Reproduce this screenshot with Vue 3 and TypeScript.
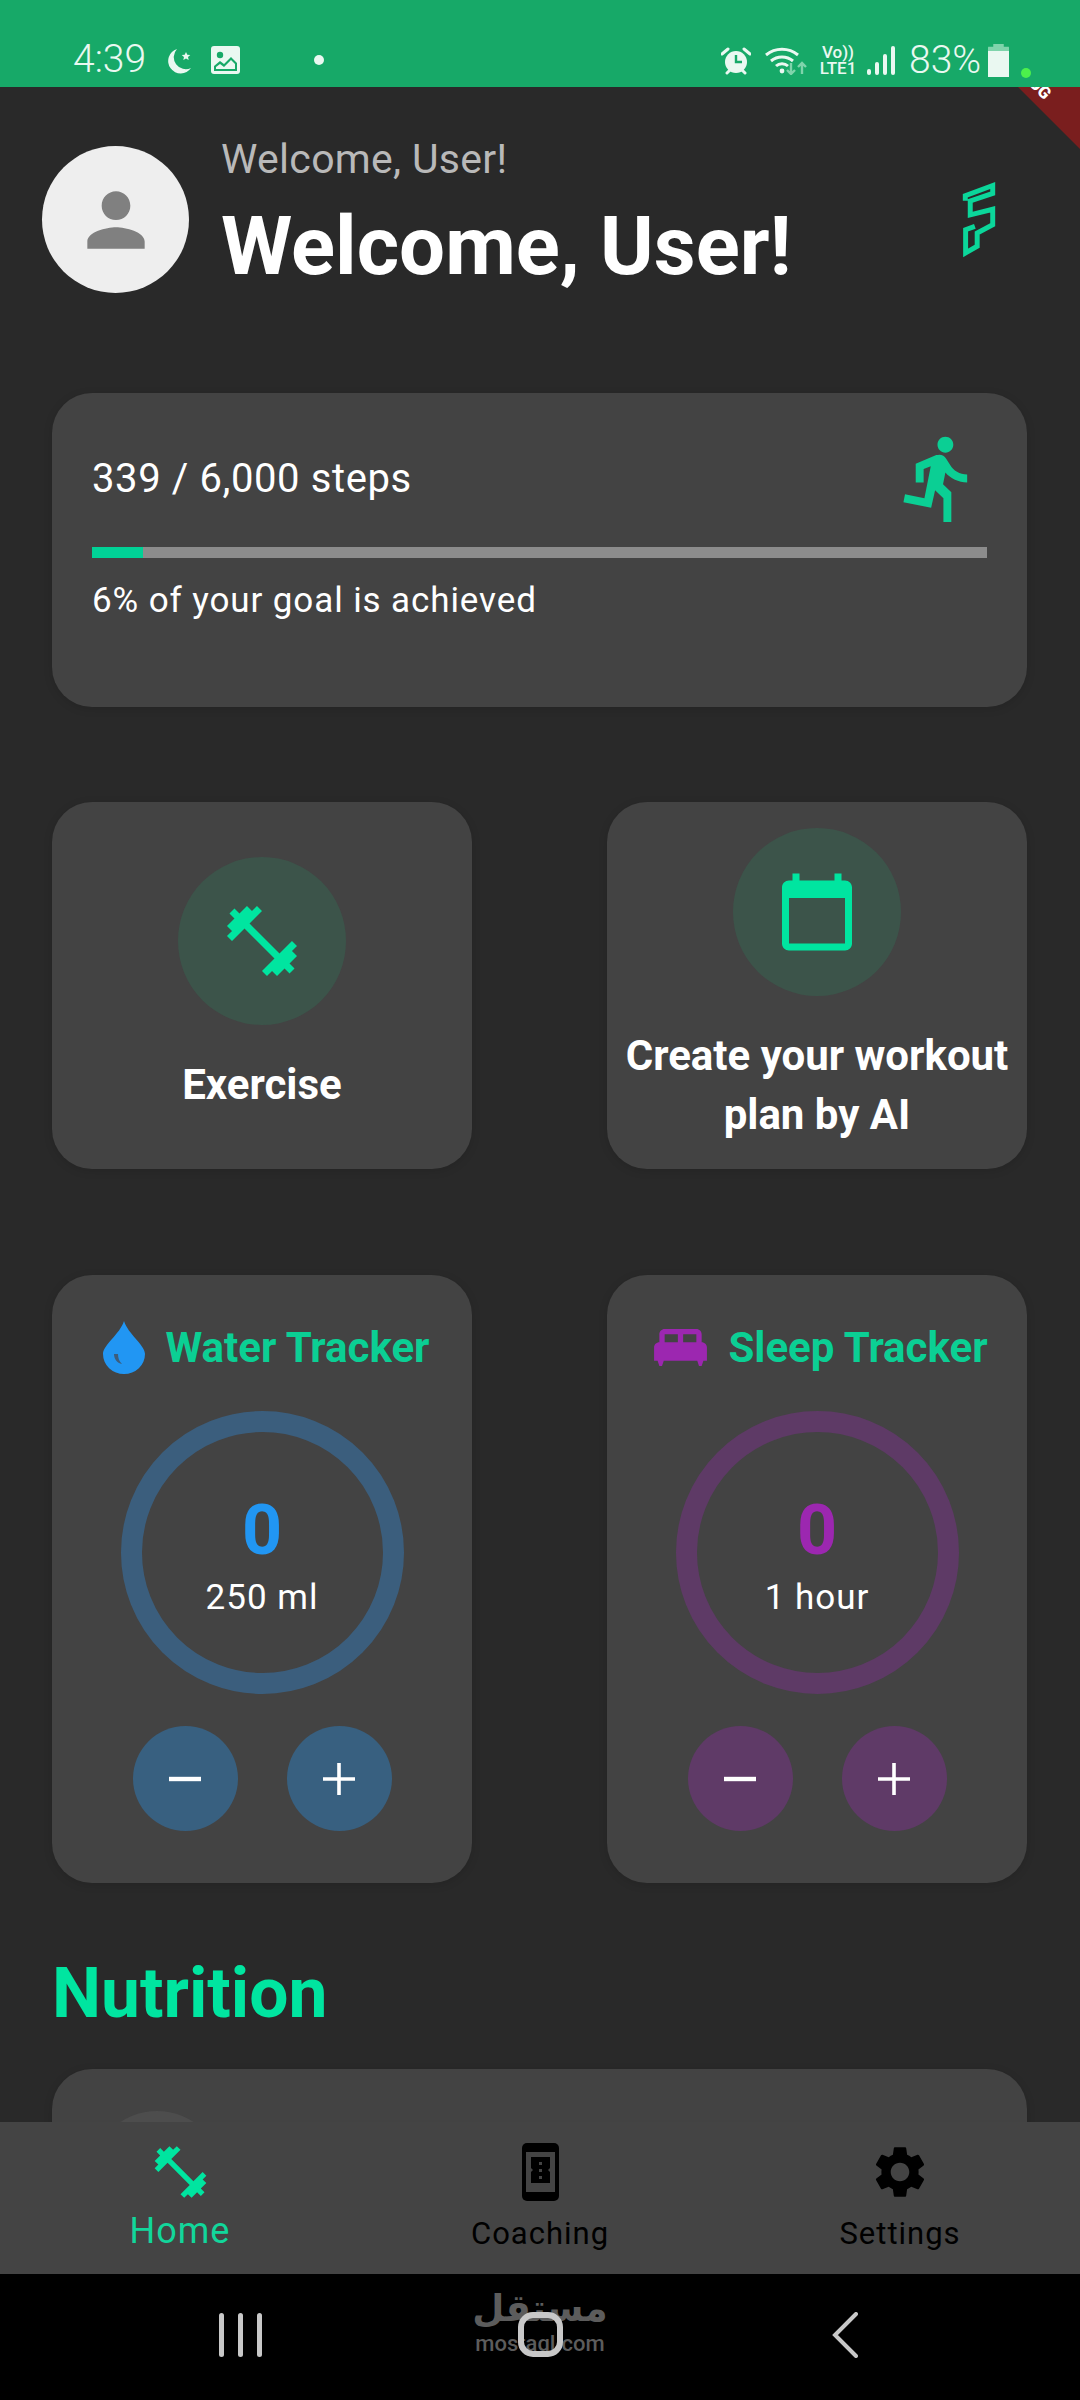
<script setup lang="ts">
import { ref } from 'vue'

// Dashboard state
const steps = ref(339)
const stepGoal = 6000
const goalRatio = (steps.value / stepGoal) * 100
const goalPercent = Math.round(goalRatio)

interface Tracker {
  id: string
  title: string
  count: number
  unit: string
  theme: string
}

const trackers: Tracker[] = [
  { id: 'water', title: 'Water Tracker', count: 0, unit: '250 ml', theme: 'blue' },
  { id: 'sleep', title: 'Sleep Tracker', count: 0, unit: '1 hour', theme: 'purple' }
]

const dumbbell =
  'M20.57 14.86L22 13.43 20.57 12 17 15.57 8.43 7 12 3.43 10.57 2 9.14 3.43 7.71 2 5.57 4.14 4.14 2.71 2.71 4.14l1.43 1.43L2 7.71l1.43 1.43L2 10.57 3.43 12 7 8.43 15.57 17 12 20.57 13.43 22l1.43-1.43L16.29 22l2.14-2.14 1.43 1.43 1.43-1.43-1.43-1.43L22 16.29z'
</script>

<template>
  <div class="phone">
    <!-- Status bar -->
    <div class="status-bar">
      <span class="clock">4:39</span>
      <svg class="st-moon" viewBox="0 0 26 26">
        <path d="M11 1A12.500 12.500 0 1 0 25 20A12 12 0 0 1 11 1Z" fill="#eaf8f1" />
        <path d="M20 4l1.300 2.800 3 .3-2.300 2 .7 3-2.700-1.500-2.700 1.500.7-3-2.300-2 3-.3z" fill="#eaf8f1" />
      </svg>
      <svg class="st-image" viewBox="0 0 29 28">
        <rect width="29" height="28" rx="3" fill="#eaf8f1" />
        <circle cx="9" cy="9" r="3.200" fill="#17a968" />
        <path d="M3 25v-5l6-5 4 3 7-7 6 6v8zM5 23h19v-5l-4-4-7 7-4-3-4 3z" fill="#17a968" />
      </svg>
      <span class="st-dot"></span>

      <svg class="st-alarm" viewBox="0 0 30 28">
        <circle cx="15" cy="15" r="11" fill="#eaf8f1" />
        <path d="M15 8v7h6" fill="none" stroke="#17a968" stroke-width="2.400" />
        <path d="M1 7l6-5M29 7l-6-5M6 26l3-3M24 26l-3-3" stroke="#eaf8f1" stroke-width="3" stroke-linecap="round" />
      </svg>
      <svg class="st-wifi" viewBox="0 0 42 30">
        <path d="M1 10a25 25 0 0 1 32 0M6 16a17 17 0 0 1 22 0M11 21a9 9 0 0 1 12 0" fill="none" stroke="#eaf8f1" stroke-width="3" />
        <circle cx="17" cy="26" r="2.400" fill="#eaf8f1" />
        <path d="M26 18v11M22 25l4 4 4-4M37 29V18M33 22l4-4 4 4" fill="none" stroke="#7fd4ab" stroke-width="2.400" />
      </svg>
      <div class="st-volte">
        <span>Vo))</span>
        <span>LTE1</span>
      </div>
      <div class="st-signal">
        <i style="height: 6px"></i>
        <i style="height: 13px"></i>
        <i style="height: 21px"></i>
        <i style="height: 29px"></i>
      </div>
      <span class="st-battery-text">83%</span>
      <div class="st-battery"><div class="st-battery-fill"></div></div>
      <span class="st-cam"></span>
    </div>

    <!-- Scrolling page -->
    <div class="content">
      <div class="debug-ribbon"><span>DEBUG</span></div>

      <header class="header">
        <div class="avatar">
          <svg viewBox="0 0 24 24" width="86" height="86">
            <path
              d="M12 12c2.210 0 4-1.790 4-4s-1.790-4-4-4-4 1.790-4 4 1.790 4 4 4zm0 2c-2.670 0-8 1.340-8 4v2h16v-2c0-2.660-5.330-4-8-4z"
              fill="#808080"
            />
          </svg>
        </div>
        <div class="greeting">
          <div class="greeting-small">Welcome, User!</div>
          <div class="greeting-big">Welcome, User!</div>
        </div>
        <svg class="logo" viewBox="180 90 115 235">
          <path
            d="M196 152V137L279 106V130L211 153V195L279 178V225L232 250V290L197 310V240L225 230"
            fill="none"
            stroke="#0bd69a"
            stroke-width="15"
          />
        </svg>
      </header>

      <section class="card steps-card">
        <div class="steps-row">
          <span class="steps-text">{{ steps }} / {{ stepGoal.toLocaleString('en-US') }} steps</span>
          <svg class="run-icon" viewBox="0 0 24 24">
            <path
              d="M13.490 5.480c1.100 0 2-.9 2-2s-.9-2-2-2-2 .9-2 2 .9 2 2 2zm-3.600 13.900l1-4.400 2.100 2v6h2v-7.500l-2.100-2 .6-3c1.300 1.500 3.300 2.500 5.500 2.500v-2c-1.900 0-3.500-1-4.300-2.400l-1-1.600c-.4-.6-1-1-1.700-1-.3 0-.5.1-.8.1l-5.200 2.200v4.700h2v-3.400l1.800-.7-1.600 8.100-4.900-1-.4 2 7 1.400z"
              fill="#0bcf94"
            />
          </svg>
        </div>
        <div class="progress"><div class="progress-fill" :style="{ width: `${goalRatio}%` }"></div></div>
        <div class="steps-note">{{ goalPercent }}% of your goal is achieved</div>
      </section>

      <div class="two-col actions">
        <div class="card action-card">
          <div class="action-circle">
            <svg viewBox="0 0 24 24" width="84" height="84"><path :d="dumbbell" fill="#00e5a0" /></svg>
          </div>
          <div class="action-label">Exercise</div>
        </div>
        <div class="card action-card">
          <div class="action-circle">
            <svg viewBox="0 0 24 24" width="84" height="84">
              <path
                d="M20 3h-1V1h-2v2H7V1H5v2H4c-1.100 0-2 .9-2 2v16c0 1.100.9 2 2 2h16c1.100 0 2-.9 2-2V5c0-1.100-.9-2-2-2zm0 18H4V8h16v13z"
                fill="#00e5a0"
              />
            </svg>
          </div>
          <div class="action-label">Create your workout<br />plan by AI</div>
        </div>
      </div>

      <div class="two-col trackers">
        <div v-for="t in trackers" :key="t.id" class="card tracker-card" :class="t.theme">
          <div class="tracker-title">
            <svg v-if="t.id === 'water'" class="drop-icon" viewBox="0 0 42 53">
              <path d="M21 0C25 13 42 24 42 33A21 20 0 0 1 0 33C0 24 17 13 21 0Z" fill="#2196f3" />
              <path d="M11 33c0 5 3 9 8 10-3-3-4-6-4-10z" fill="#3d5d7c" />
            </svg>
            <svg v-else class="bed-icon" viewBox="2 5 20 14">
              <path
                d="M20 10V7c0-1.100-.9-2-2-2H6c-1.100 0-2 .9-2 2v3c-1.100 0-2 .9-2 2v5h1.330L4 19h1l.67-2h12.670l.66 2h1l.67-2H22v-5c0-1.100-.9-2-2-2zm-9 0H6V7h5v3zm7 0h-5V7h5v3z"
                fill="#9c27b0"
              />
            </svg>
            <span>{{ t.title }}</span>
          </div>
          <div class="ring">
            <div class="ring-count">{{ t.count }}</div>
            <div class="ring-unit">{{ t.unit }}</div>
          </div>
          <div class="tracker-buttons">
            <button class="round-btn">
              <svg viewBox="0 0 34 34" width="34" height="34"><path d="M1 17h32" stroke="#fff" stroke-width="4.400" /></svg>
            </button>
            <button class="round-btn">
              <svg viewBox="0 0 34 34" width="34" height="34"><path d="M1 17h32M17 1v32" stroke="#fff" stroke-width="3.600" /></svg>
            </button>
          </div>
        </div>
      </div>

      <h2 class="section-title">Nutrition</h2>

      <div class="card nutrition-card">
        <div class="nutrition-circle"></div>
      </div>
    </div>

    <!-- Bottom navigation -->
    <nav class="bottom-nav">
      <div class="nav-item active">
        <svg viewBox="0 0 24 24" width="65" height="65"><path :d="dumbbell" fill="#00e5a0" /></svg>
        <span>Home</span>
      </div>
      <div class="nav-item">
        <svg viewBox="0 0 37 58" width="37" height="58">
          <rect width="37" height="58" rx="5" fill="#000" />
          <rect x="4" y="9" width="29" height="40" fill="#444" />
          <path d="M9 14h19v11l-2 2 2 2v11H9V29l2-2-2-2z" fill="#000" />
          <path d="M18.500 19v3M18.500 26v3M18.500 33v3" stroke="#444" stroke-width="3" />
        </svg>
        <span>Coaching</span>
      </div>
      <div class="nav-item">
        <svg viewBox="0 0 24 24" width="62" height="62">
          <path
            d="M19.140 12.940c.04-.3.06-.61.06-.94 0-.32-.02-.64-.07-.94l2.030-1.580c.18-.14.23-.41.12-.61l-1.920-3.320c-.12-.22-.37-.29-.59-.22l-2.390.96c-.5-.38-1.030-.7-1.620-.94l-.36-2.540c-.04-.24-.24-.41-.48-.41h-3.840c-.24 0-.43.17-.47.41l-.36 2.540c-.59.24-1.130.57-1.620.94l-2.390-.96c-.22-.08-.47 0-.59.22L2.740 8.870c-.12.21-.08.47.12.61l2.030 1.580c-.05.3-.09.63-.09.94s.02.64.07.94l-2.030 1.580c-.18.14-.23.41-.12.61l1.920 3.320c.12.22.37.29.59.22l2.390-.96c.5.38 1.030.7 1.620.94l.36 2.540c.05.24.24.41.48.41h3.840c.24 0 .44-.17.47-.41l.36-2.540c.59-.24 1.130-.56 1.620-.94l2.390.96c.22.08.47 0 .59-.22l1.920-3.320c.12-.22.07-.47-.12-.61l-2.010-1.580zM12 15.600c-1.980 0-3.600-1.620-3.600-3.600s1.620-3.600 3.600-3.600 3.600 1.620 3.600 3.600-1.620 3.600-3.600 3.600z"
            fill="#000"
          />
        </svg>
        <span>Settings</span>
      </div>
    </nav>

    <!-- System buttons -->
    <div class="system-bar">
      <div class="sys-slot">
        <div class="sys-recents"><i></i><i></i><i></i></div>
      </div>
      <div class="sys-slot">
        <div class="watermark">
          <div class="watermark-ar">مستقل</div>
          <div class="watermark-en">mostaql.com</div>
        </div>
        <div class="sys-home"></div>
      </div>
      <div class="sys-slot sys-back">
        <svg viewBox="0 0 26 46" width="26" height="46">
          <path d="M24 2L3 23l21 21" fill="none" stroke="#c8c8c8" stroke-width="4" stroke-linecap="round" />
        </svg>
      </div>
    </div>
  </div>
</template>

<style>
body {
  background: #292929;
}
</style>

<style scoped>
.phone {
  position: relative;
  width: 1080px;
  height: 2400px;
  display: flex;
  flex-direction: column;
  overflow: hidden;
  background: #292929;
  font-family: Roboto, "Noto Sans", sans-serif;
  color: #fff;
}

/* Status bar */
.status-bar {
  flex: none;
  height: 87px;
  display: flex;
  align-items: flex-start;
  padding-left: 73px;
  box-sizing: border-box;
  background: #17a968;
  color: #eaf8f1;
}

.clock {
  margin-top: 37px;
  width: 72px;
  font-size: 39px;
  line-height: 44px;
  font-weight: 300;
}

.st-moon {
  margin: 48px 0 0 21px;
  width: 26px;
  height: 26px;
}

.st-image {
  margin: 46px 0 0 19px;
  width: 29px;
  height: 28px;
}

.st-dot {
  margin: 55px 0 0 74px;
  width: 10px;
  height: 10px;
  border-radius: 50%;
  background: #eaf8f1;
}

.st-alarm {
  margin: 47px 0 0 397px;
  width: 30px;
  height: 28px;
}

.st-wifi {
  margin: 45px 0 0 14px;
  width: 42px;
  height: 30px;
}

.st-volte {
  margin: 44px 0 0 11px;
  width: 40px;
  display: flex;
  flex-direction: column;
  align-items: center;
  font-size: 17px;
  line-height: 16px;
  font-weight: 500;
}

.st-signal {
  margin: 46px 0 0 9px;
  width: 28px;
  height: 29px;
  display: flex;
  align-items: flex-end;
  justify-content: space-between;
}

.st-signal i {
  width: 4px;
  background: #eaf8f1;
  border-radius: 2px;
}

.st-battery-text {
  margin: 38px 0 0 14px;
  width: 73px;
  font-size: 39px;
  line-height: 44px;
  font-weight: 300;
}

.st-battery {
  margin: 44px 0 0 6px;
  position: relative;
  width: 21px;
  height: 33px;
  background: #7fd4ab;
  border-radius: 4px 4px 3px 3px;
  clip-path: polygon(25% 0, 75% 0, 75% 8%, 100% 8%, 100% 100%, 0 100%, 0 8%, 25% 8%);
}

.st-battery-fill {
  position: absolute;
  left: 0;
  right: 0;
  bottom: 0;
  height: 26px;
  background: #eaf8f1;
}

.st-cam {
  margin: 68px 0 0 12px;
  width: 10px;
  height: 10px;
  border-radius: 50%;
  background: #4cf04c;
}

/* Page */
.content {
  position: relative;
  flex: 1;
  min-height: 0;
  overflow: hidden;
  padding: 59px 53px 0 52px;
}

.debug-ribbon {
  position: absolute;
  top: 0;
  right: 0;
  width: 62px;
  height: 62px;
  background: #7a1e1e;
  clip-path: polygon(0 0, 100% 0, 100% 100%);
}

.debug-ribbon span {
  position: absolute;
  top: -20px;
  left: -16px;
  font-size: 17px;
  line-height: 20px;
  font-weight: 900;
  transform: rotate(45deg);
}

.header {
  display: flex;
  align-items: center;
  margin-left: -10px;
  margin-right: 29px;
  height: 147px;
}

.avatar {
  flex: none;
  width: 147px;
  height: 147px;
  border-radius: 50%;
  background: #eeeeee;
  display: flex;
  align-items: center;
  justify-content: center;
}

.greeting {
  flex: 1;
  margin-left: 32px;
  margin-top: -10px;
}

.greeting-small {
  font-size: 41px;
  line-height: 46px;
  letter-spacing: 0.3px;
  color: #b9b9b9;
}

.greeting-big {
  margin-top: 17px;
  font-size: 81.500px;
  line-height: 94px;
  font-weight: 700;
}

.logo {
  flex: none;
  width: 38px;
  height: 78px;
  margin-top: -2px;
}

.card {
  background: #434343;
  border-radius: 40px;
  box-shadow: 0 2px 10px rgba(0, 0, 0, 0.12);
}

.steps-card {
  margin-top: 100px;
  height: 314px;
  box-sizing: border-box;
  padding: 38px 40px 0;
}

.steps-row {
  display: flex;
  justify-content: space-between;
  align-items: center;
  height: 95px;
}

.steps-text {
  font-size: 40px;
  letter-spacing: 0.6px;
}

.run-icon {
  width: 95px;
  height: 95px;
}

.progress {
  margin-top: 21px;
  height: 11px;
  background: #8c8c8c;
}

.progress-fill {
  height: 100%;
  background: #00d296;
}

.steps-note {
  margin-top: 23px;
  font-size: 35px;
  line-height: 40px;
  letter-spacing: 0.9px;
}

.two-col {
  display: flex;
  justify-content: space-between;
}

.actions {
  margin-top: 95px;
}

.action-card {
  width: 420px;
  height: 367px;
  display: flex;
  flex-direction: column;
  align-items: center;
  justify-content: center;
  gap: 30px;
}

.action-circle {
  width: 168px;
  height: 168px;
  border-radius: 50%;
  background: #3c544a;
  display: flex;
  align-items: center;
  justify-content: center;
}

.action-label {
  font-size: 42px;
  line-height: 59px;
  font-weight: 700;
  text-align: center;
}

.trackers {
  margin-top: 106px;
}

.tracker-card {
  width: 420px;
  height: 608px;
  box-sizing: border-box;
  padding-top: 46px;
  display: flex;
  flex-direction: column;
  align-items: center;
}

.tracker-title {
  height: 53px;
  padding-left: 8px;
  display: flex;
  align-items: center;
  gap: 21px;
  font-size: 42px;
  font-weight: 700;
  color: #0bcf94;
}

.drop-icon {
  width: 42px;
  height: 53px;
}

.bed-icon {
  width: 53px;
  height: 37px;
}

.ring {
  margin-top: 37px;
  width: 283px;
  height: 283px;
  box-sizing: border-box;
  border: 21px solid;
  border-radius: 50%;
  display: flex;
  flex-direction: column;
  align-items: center;
  justify-content: center;
}

.ring-count {
  font-size: 70px;
  line-height: 90px;
  font-weight: 700;
}

.ring-unit {
  font-size: 35px;
  line-height: 46px;
  letter-spacing: 1px;
}

.tracker-buttons {
  margin-top: 32px;
  display: flex;
  gap: 49px;
}

.round-btn {
  width: 105px;
  height: 105px;
  padding: 0;
  border: none;
  border-radius: 50%;
  display: flex;
  align-items: center;
  justify-content: center;
}

.blue .ring {
  border-color: #3b5e7d;
}

.blue .ring-count {
  color: #2196f3;
}

.blue .round-btn {
  background: #386080;
}

.purple .ring {
  border-color: #5e3a66;
}

.purple .ring-count {
  color: #9c27b0;
}

.purple .round-btn {
  background: #5f3a67;
}

.section-title {
  margin: 70px 0 0;
  font-size: 69.500px;
  line-height: 82px;
  font-weight: 700;
  color: #00e5a0;
}

.nutrition-card {
  margin-top: 34px;
  height: 300px;
  padding: 42px 0 0 39px;
  box-sizing: border-box;
}

.nutrition-circle {
  width: 132px;
  height: 132px;
  border-radius: 50%;
  background: #4d4d4d;
}

/* Bottom navigation */
.bottom-nav {
  flex: none;
  height: 152px;
  display: grid;
  grid-template-columns: repeat(3, 1fr);
  background: #444444;
  color: #000;
}

.nav-item {
  display: flex;
  flex-direction: column;
  align-items: center;
  padding-top: 19px;
  height: 133px;
  font-size: 31px;
  letter-spacing: 1px;
}

.nav-item svg {
  height: 62px;
}

.nav-item span {
  margin-top: 12px;
}

.nav-item.active {
  color: #12d69b;
  font-size: 36px;
}

.nav-item.active span {
  margin-top: 7px;
}

/* System bar */
.system-bar {
  flex: none;
  height: 126px;
  display: grid;
  grid-template-columns: 1fr 1fr 1fr;
  background: #000;
}

.sys-slot {
  position: relative;
  display: flex;
  align-items: center;
  justify-content: center;
  padding-bottom: 5px;
}

.sys-recents {
  display: flex;
  gap: 14px;
  margin-left: 120px;
}

.sys-recents i {
  width: 5px;
  height: 44px;
  border-radius: 3px;
  background: #c8c8c8;
}

.sys-home {
  position: relative;
  width: 45px;
  height: 45px;
  box-sizing: border-box;
  border: 6px solid #c8c8c8;
  border-radius: 15px;
}

.watermark {
  position: absolute;
  top: 10px;
  left: 0;
  right: 0;
  text-align: center;
  color: #5c5c5c;
}

.watermark-ar {
  font-family: "DejaVu Sans", sans-serif;
  font-weight: 700;
  font-size: 37px;
  line-height: 50px;
}

.watermark-en {
  font-size: 22px;
  line-height: 20px;
  font-weight: 500;
}

.sys-back {
  justify-content: flex-start;
  padding-left: 112px;
}
</style>
